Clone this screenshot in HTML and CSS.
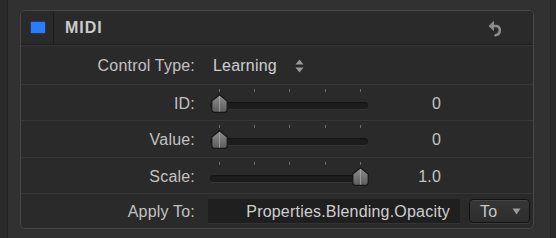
FILE: index.html
```html
<!DOCTYPE html>
<html>
<head>
<meta charset="utf-8">
<link rel="stylesheet" href="styles.css">
</head>
<body>
<div class="frame">
  <div class="panel">
    <div class="header">
      <div class="check-cell"><span class="check"></span></div>
      <div class="title">MIDI</div>
      <svg class="undo" width="14" height="17" viewBox="0 0 14 17">
        <path d="M0.5 6 L6 0.8 L6 11.2 Z" fill="#8c8c8c"/>
        <path d="M5 6 H7.5 Q11.8 6 11.8 10.3 Q11.8 14.6 7.5 15.3" fill="none" stroke="#8c8c8c" stroke-width="2.6" stroke-linecap="round"/>
      </svg>
    </div>
    <div class="row row-ct">
      <div class="label">Control Type:</div>
      <div class="control">
        <span class="popup-text">Learning</span>
        <svg class="updown" width="9" height="14" viewBox="0 0 9 14">
          <path d="M4.5 0.5 L8.5 5.5 H0.5 Z" fill="#9a9a9a"/>
          <path d="M4.5 13.5 L8.5 8.5 H0.5 Z" fill="#9a9a9a"/>
        </svg>
      </div>
    </div>
    <div class="row row-id">
      <div class="label">ID:</div>
      <div class="control">
        <div class="slider">
          <div class="ticks"><i></i><i></i><i></i><i></i><i></i></div>
          <div class="track"></div>
          <svg class="thumb" style="left:1px" width="17" height="19" viewBox="0 0 17 19">
            <defs><linearGradient id="g1" x1="0" y1="0" x2="0" y2="1"><stop offset="0" stop-color="#8e8e8e"/><stop offset="1" stop-color="#5c5c5c"/></linearGradient></defs>
            <path d="M8.5 0.7 L16.2 7 V15.5 Q16.2 18.3 13.5 18.3 H3.5 Q0.8 18.3 0.8 15.5 V7 Z" fill="url(#g1)" stroke="#161616" stroke-width="1.2"/>
            <line x1="8.5" y1="2" x2="8.5" y2="17.6" stroke="#a4a4a4" stroke-width="0.8"/>
          </svg>
        </div>
        <div class="num">0</div>
      </div>
    </div>
    <div class="row row-val">
      <div class="label">Value:</div>
      <div class="control">
        <div class="slider">
          <div class="ticks"><i></i><i></i><i></i><i></i><i></i></div>
          <div class="track"></div>
          <svg class="thumb" style="left:1px" width="17" height="19" viewBox="0 0 17 19">
            <defs><linearGradient id="g2" x1="0" y1="0" x2="0" y2="1"><stop offset="0" stop-color="#8e8e8e"/><stop offset="1" stop-color="#5c5c5c"/></linearGradient></defs>
            <path d="M8.5 0.7 L16.2 7 V15.5 Q16.2 18.3 13.5 18.3 H3.5 Q0.8 18.3 0.8 15.5 V7 Z" fill="url(#g2)" stroke="#161616" stroke-width="1.2"/>
            <line x1="8.5" y1="2" x2="8.5" y2="17.6" stroke="#a4a4a4" stroke-width="0.8"/>
          </svg>
        </div>
        <div class="num">0</div>
      </div>
    </div>
    <div class="row row-sc">
      <div class="label">Scale:</div>
      <div class="control">
        <div class="slider">
          <div class="ticks"><i></i><i></i><i></i><i></i><i></i></div>
          <div class="track"></div>
          <svg class="thumb" style="left:142px" width="17" height="19" viewBox="0 0 17 19">
            <defs><linearGradient id="g3" x1="0" y1="0" x2="0" y2="1"><stop offset="0" stop-color="#8e8e8e"/><stop offset="1" stop-color="#5c5c5c"/></linearGradient></defs>
            <path d="M8.5 0.7 L16.2 7 V15.5 Q16.2 18.3 13.5 18.3 H3.5 Q0.8 18.3 0.8 15.5 V7 Z" fill="url(#g3)" stroke="#161616" stroke-width="1.2"/>
            <line x1="8.5" y1="2" x2="8.5" y2="17.6" stroke="#a4a4a4" stroke-width="0.8"/>
          </svg>
        </div>
        <div class="num">1.0</div>
      </div>
    </div>
    <div class="row row-ap">
      <div class="label">Apply To:</div>
      <div class="control">
        <div class="field">Properties.Blending.Opacity</div>
        <div class="button"><span>To</span>
          <svg width="9" height="7" viewBox="0 0 9 7"><path d="M0.5 0.5 H8.5 L4.5 6.5 Z" fill="#9a9a9a"/></svg>
        </div>
      </div>
    </div>
  </div>
</div>
</body>
</html>
```
FILE: styles.css
```css
html, body {
  margin: 0;
  padding: 0;
}
body {
  background: #2a2a2a;
  font-family: "Liberation Sans", Arial, sans-serif;
  width: 556px;
  height: 238px;
  overflow: hidden;
}
.frame {
  margin-left: 7px;
  width: 544px;
  height: 238px;
  box-sizing: border-box;
  border-left: 1px solid #222;
  border-right: 1px solid #262626;
  background: #313131;
  padding: 10px 0 0 12px;
}
.panel {
  width: 514px;
  box-sizing: border-box;
  border: 1px solid #474747;
  border-radius: 5px;
  background: #2a2a2a;
  overflow: hidden;
}
.header {
  display: flex;
  align-items: center;
  height: 33px;
  border-bottom: 1px solid #1e1e1e;
  background: #2a2a2a;
}
.check-cell {
  width: 32px;
  height: 33px;
  border-right: 1px solid #1c1c1c;
  display: flex;
  align-items: center;
  justify-content: center;
}
.check {
  width: 14px;
  height: 11px;
  background: #2a7cff;
  box-shadow: 0 0 2px rgba(40, 120, 255, 0.6);
  margin-left: 2px;
}
.title {
  flex: 1;
  padding-left: 11px;
  font-weight: bold;
  font-size: 16px;
  color: #cacaca;
  letter-spacing: 1px;
}
.undo {
  margin-right: 31px;
  margin-top: 2px;
}
.row {
  display: flex;
  align-items: center;
  border-top: 1px solid #363636;
  font-size: 16px;
  letter-spacing: 0.2px;
  color: #c2c2c2;
}
.row-ct { height: 38px; }
.row-id { height: 35px; }
.row-val { height: 36px; }
.row-sc { height: 35px; }
.row-ap { height: 34px; }
.label {
  width: 174px;
  text-align: right;
  padding-top: 2px;
}
.control {
  display: flex;
  align-items: center;
  margin-left: 13px;
  height: 100%;
}
.popup-text {
  margin-left: 5px;
  padding-top: 2px;
  color: #cfcfcf;
}
.updown {
  margin-left: 18px;
  margin-top: 1px;
}
.slider {
  position: relative;
  width: 158px;
  height: 35px;
  margin-left: 2px;
  align-self: flex-start;
}
.ticks {
  display: flex;
  justify-content: space-between;
  padding: 4px 7px 0 8.5px;
}
.ticks i {
  display: block;
  width: 1px;
  height: 3px;
  background: #6c6c6c;
}
.track {
  position: absolute;
  left: 0;
  right: 0;
  top: 17px;
  height: 7px;
  border-radius: 4px;
  background: #1c1c1c;
  box-shadow: inset 0 1px 1px #141414, 0 1px 0 #353535;
}
.thumb {
  position: absolute;
  top: 9px;
}
.num {
  width: 73px;
  text-align: right;
  padding-top: 2px;
  color: #c4c4c4;
}
.field {
  width: 252px;
  height: 25px;
  box-sizing: border-box;
  background: #1f1f1f;
  border-bottom: 1px solid #333;
  text-align: right;
  padding: 4px 10px 0 0;
  color: #cfcfcf;
  white-space: nowrap;
}
.button {
  display: flex;
  align-items: center;
  justify-content: space-between;
  width: 61px;
  height: 24px;
  box-sizing: border-box;
  margin-left: 9px;
  border: 1px solid #121212;
  border-radius: 4px;
  background: linear-gradient(#363636, #2d2d2d);
  box-shadow: inset 0 1px 0 #444, 0 1px 0 #3a3a3a;
  padding: 1px 8px 0 10px;
  color: #c8c8c8;
}
```
